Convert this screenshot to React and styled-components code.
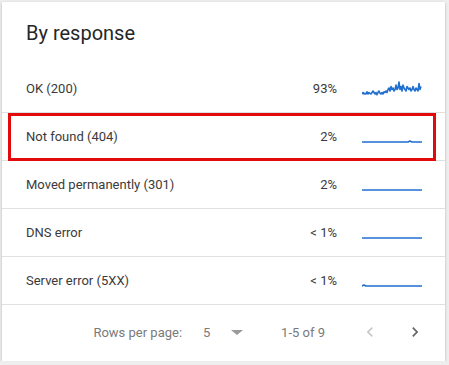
import styled, { createGlobalStyle } from "styled-components";

const GlobalStyle = createGlobalStyle`
  html, body {
    margin: 0;
    padding: 0;
    background: #eeeeee;
  }
  body {
    font-family: Roboto, "Liberation Sans", Arial, sans-serif;
  }
`;

const Card = styled.div`
  margin: 2px 0 0 2px;
  width: 443px;
  height: 359px;
  background: #fff;
  box-shadow: 0 1px 3px rgba(0, 0, 0, 0.2), 0 1px 1px rgba(0, 0, 0, 0.1);
  display: flex;
  flex-direction: column;
`;

const Header = styled.div`
  height: 63px;
  box-sizing: border-box;
  padding: 19px 24px 0;
  h2 {
    margin: 0;
    font-size: 20px;
    line-height: 24px;
    font-weight: 400;
    color: #262626;
  }
`;

const Row = styled.div`
  position: relative;
  height: 48px;
  box-sizing: border-box;
  border-bottom: 1px solid #e0e0e0;
  display: flex;
  align-items: center;
  padding: 0 23px 0 24px;
  font-size: 13px;
  color: #3a3a3a;
`;

const Label = styled.span`
  flex: 1;
`;

const Percent = styled.span`
  width: 60px;
  text-align: right;
  margin-right: 25px;
`;

const Highlight = styled.div`
  position: absolute;
  left: 6px;
  right: 9px;
  top: 0;
  bottom: -1px;
  border: 3px solid #e20a0a;
  pointer-events: none;
`;

const Footer = styled.div`
  flex: 1;
  display: flex;
  align-items: center;
  justify-content: flex-end;
  padding: 0 18px 2px 0;
  font-size: 13px;
  color: #7a7a7a;
`;

const Select = styled.div`
  display: flex;
  align-items: center;
  margin-left: 21px;
  span {
    width: 28px;
  }
`;

const Caret = styled.i`
  width: 0;
  height: 0;
  border-left: 6px solid transparent;
  border-right: 6px solid transparent;
  border-top: 5px solid #9a9a9a;
`;

const Range = styled.span`
  margin-left: 38px;
`;

const IconButton = styled.button`
  width: 24px;
  height: 24px;
  padding: 0;
  border: 0;
  background: none;
  display: flex;
  align-items: center;
  justify-content: center;
  margin-left: ${(p) => p.$gap}px;
  color: ${(p) => (p.$disabled ? "#c8c8c8" : "#666")};
  svg {
    width: 20px;
    height: 20px;
    fill: currentColor;
  }
`;

const Spark = ({ points }) => (
  <svg width="60" height="18" viewBox="0 0 60 18">
    <polyline
      points={points}
      fill="none"
      stroke="#1f6fd0"
      strokeWidth="1.6"
      strokeLinejoin="round"
    />
  </svg>
);

const noisy = [
  12, 11, 12, 11.5, 12, 10.5, 12, 11, 11.5, 12, 11, 10, 11, 12, 11, 12.5,
  11, 10, 11.5, 12, 11, 12, 10.5, 11, 10, 11, 9, 8, 10, 7, 9, 8, 10, 9, 6,
  9, 8, 4, 9, 7, 10, 6, 8, 9, 10, 7, 8, 9, 8, 10, 9, 7, 9, 10, 8, 9, 10, 5,
  9, 7,
];
const okPoints = noisy
  .map((y, i) => `${i},${(14 - (12 - y) * 1.5).toFixed(1)}`)
  .join(" ");
const flat = "0,14 60,14";
const notFound = "0,14 46,14 48,13 50,14 60,14";
const serverErr = "0,14 2,13 4,14 60,14";

const rows = [
  { label: "OK (200)", pct: "93%", points: okPoints },
  { label: "Not found (404)", pct: "2%", points: notFound, marked: true },
  { label: "Moved permanently (301)", pct: "2%", points: flat },
  { label: "DNS error", pct: "< 1%", points: flat },
  { label: "Server error (5XX)", pct: "< 1%", points: serverErr },
];

export default function App() {
  return (
    <>
      <GlobalStyle />
      <Card>
        <Header>
          <h2>By response</h2>
        </Header>
        {rows.map((r) => (
          <Row key={r.label}>
            <Label>{r.label}</Label>
            <Percent>{r.pct}</Percent>
            <Spark points={r.points} />
            {r.marked && <Highlight />}
          </Row>
        ))}
        <Footer>
          <span>Rows per page:</span>
          <Select>
            <span>5</span>
            <Caret />
          </Select>
          <Range>1-5 of 9</Range>
          <IconButton $gap={33} $disabled>
            <svg viewBox="0 0 24 24">
              <path d="M15.41 7.41L14 6l-6 6 6 6 1.41-1.41L10.83 12z" />
            </svg>
          </IconButton>
          <IconButton $gap={21}>
            <svg viewBox="0 0 24 24">
              <path d="M8.59 16.59L10 18l6-6-6-6-1.41 1.41L13.17 12z" />
            </svg>
          </IconButton>
        </Footer>
      </Card>
    </>
  );
}
